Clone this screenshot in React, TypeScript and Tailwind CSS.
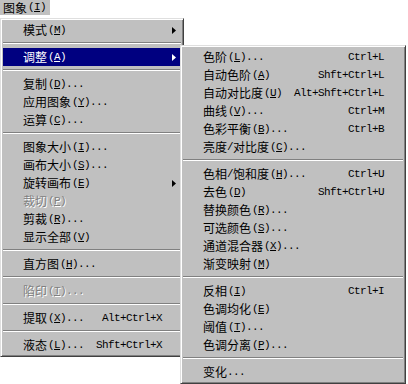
import React from 'react';

type Entry = {
    sep?: boolean;
    label?: string;
    hot?: string;
    dots?: boolean;
    shortcut?: string;
    sub?: boolean;
    active?: boolean;
    disabled?: boolean;
};

const MAIN_ITEMS: Entry[] = [
    {label: '模式', hot: 'M', sub: true},
    {sep: true},
    {label: '调整', hot: 'A', sub: true, active: true},
    {sep: true},
    {label: '复制', hot: 'D', dots: true},
    {label: '应用图象', hot: 'Y', dots: true},
    {label: '运算', hot: 'C', dots: true},
    {sep: true},
    {label: '图象大小', hot: 'I', dots: true},
    {label: '画布大小', hot: 'S', dots: true},
    {label: '旋转画布', hot: 'E', sub: true},
    {label: '裁切', hot: 'P', disabled: true},
    {label: '剪裁', hot: 'R', dots: true},
    {label: '显示全部', hot: 'V'},
    {sep: true},
    {label: '直方图', hot: 'H', dots: true},
    {sep: true},
    {label: '陷印', hot: 'T', dots: true, disabled: true},
    {sep: true},
    {label: '提取', hot: 'X', dots: true, shortcut: 'Alt+Ctrl+X'},
    {sep: true},
    {label: '液态', hot: 'L', dots: true, shortcut: 'Shft+Ctrl+X'},
];

const ADJUST_ITEMS: Entry[] = [
    {label: '色阶', hot: 'L', dots: true, shortcut: 'Ctrl+L'},
    {label: '自动色阶', hot: 'A', shortcut: 'Shft+Ctrl+L'},
    {label: '自动对比度', hot: 'U', shortcut: 'Alt+Shft+Ctrl+L'},
    {label: '曲线', hot: 'V', dots: true, shortcut: 'Ctrl+M'},
    {label: '色彩平衡', hot: 'B', dots: true, shortcut: 'Ctrl+B'},
    {label: '亮度/对比度', hot: 'C', dots: true},
    {sep: true},
    {label: '色相/饱和度', hot: 'H', dots: true, shortcut: 'Ctrl+U'},
    {label: '去色', hot: 'D', shortcut: 'Shft+Ctrl+U'},
    {label: '替换颜色', hot: 'R', dots: true},
    {label: '可选颜色', hot: 'S', dots: true},
    {label: '通道混合器', hot: 'X', dots: true},
    {label: '渐变映射', hot: 'M'},
    {sep: true},
    {label: '反相', hot: 'I', shortcut: 'Ctrl+I'},
    {label: '色调均化', hot: 'E'},
    {label: '阈值', hot: 'T', dots: true},
    {label: '色调分离', hot: 'P', dots: true},
    {sep: true},
    {label: '变化', dots: true},
];

const MONO = "font-['Liberation_Mono',monospace] text-[11px] tracking-[-0.6px]";

// half-width parts (slash, brackets, dots) go in the mono font like the old bitmap font
const Label: React.FC<{text: string}> = ({text}) => (
    <>
        {text.split(/([\x00-\x7f]+)/).map((part, i) =>
            /^[\x00-\x7f]+$/.test(part) ? (
                <span key={i} className={MONO}>
                    {part}
                </span>
            ) : (
                <span key={i}>{part}</span>
            ),
        )}
    </>
);

const Arrow: React.FC<{white?: boolean}> = ({white}) => (
    <svg width="4" height="7" viewBox="0 0 4 7">
        <path d="M0 0L4 3.5L0 7Z" fill={white ? '#ffffff' : '#000000'} />
    </svg>
);

const Row: React.FC<{item: Entry}> = ({item}) => {
    if (item.sep) {
        return (
            <div className="h-[9px] pt-[3px]">
                <div className="h-px bg-[#808080]" />
                <div className="h-px bg-white" />
            </div>
        );
    }
    const tone = item.active
        ? 'bg-[#000080] text-white'
        : item.disabled
          ? 'text-[#808080] [text-shadow:1px_1px_0_#ffffff]'
          : 'text-black';
    return (
        <div className={`flex h-[18px] items-center pl-[20px] whitespace-nowrap ${tone}`}>
            <span className="flex flex-1 items-center">
                <Label text={item.label ?? ''} />
                {item.hot && (
                    <span className={`${MONO} ml-[1px]`}>
                        (<span className="underline">{item.hot}</span>)
                    </span>
                )}
                {item.dots && <span className={MONO}>...</span>}
            </span>
            {item.shortcut && <span className={MONO}>{item.shortcut}</span>}
            <span className="flex w-[19px] justify-end pr-[5px]">{item.sub && <Arrow white={item.active} />}</span>
        </div>
    );
};

const Menu: React.FC<{items: Entry[]; className?: string}> = ({items, className}) => (
    <div
        className={`border border-t-[#dfdfdf] border-l-[#dfdfdf] border-r-[#404040] border-b-[#404040] bg-[#c0c0c0] p-[2px] shadow-[inset_1px_1px_0_#ffffff,inset_-1px_-1px_0_#808080] ${className ?? ''}`}
    >
        {items.map((item, i) => (
            <Row key={i} item={item} />
        ))}
    </div>
);

const App: React.FC = () => {
    return (
        <div className="relative h-[384px] w-[408px] overflow-hidden bg-white font-['Noto_Sans_CJK_SC',sans-serif] text-[12px] leading-[18px] text-black">
            <div className="flex h-[15px]">
                <div className="flex items-center bg-[#c0c0c0] pr-[4px] pl-[3px] leading-[15px]">
                    <span>图象</span>
                    <span className={`${MONO} ml-[1px]`}>
                        (<span className="underline">I</span>)
                    </span>
                </div>
            </div>
            <Menu items={MAIN_ITEMS} className="mt-[3px] w-[184px]" />
            <Menu items={ADJUST_ITEMS} className="absolute top-[45px] left-[180px] w-[226px]" />
        </div>
    );
};

export default App;
